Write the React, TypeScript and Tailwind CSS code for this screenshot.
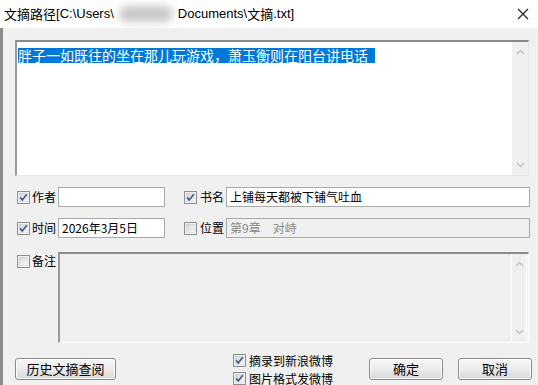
import React from 'react';

const cjk = { fontFamily: '"Noto Sans CJK SC", "Liberation Sans", sans-serif' };
const ui = { fontFamily: '"Liberation Sans", "Noto Sans CJK SC", sans-serif' };

const Check = ({ on = false }: { on?: boolean }) => (
  <svg width="13" height="13" viewBox="0 0 13 13" className="shrink-0">
    <defs>
      <linearGradient id={on ? 'cbOn' : 'cbOff'} x1="0" y1="0" x2="1" y2="1">
        <stop offset="0" stopColor="#d4d4d4" />
        <stop offset="1" stopColor="#fbfbfb" />
      </linearGradient>
    </defs>
    <rect x="0.5" y="0.5" width="12" height="12" fill="#fff" stroke="#8e8f8f" />
    <rect x="2" y="2" width="9" height="9" fill={`url(#${on ? 'cbOn' : 'cbOff'})`} stroke="#c9c9c9" strokeWidth="0.6" />
    {on && <path d="M3.2 6.4 L5.3 9 L9.8 3.2" fill="none" stroke="#3d5a9a" strokeWidth="1.7" />}
  </svg>
);

const ScrollBar = ({ light = false }: { light?: boolean }) => (
  <div className={`w-[16px] h-full flex flex-col justify-between items-center py-[7px] ${light ? 'border-l border-r border-white' : ''} bg-[#f0f0f0]`}>
    <svg width="9" height="6" viewBox="0 0 9 6"><path d="M1 5 L4.5 1.5 L8 5" fill="none" stroke="#c2c2c2" strokeWidth="1.4" /></svg>
    <svg width="9" height="6" viewBox="0 0 9 6"><path d="M1 1 L4.5 4.5 L8 1" fill="none" stroke="#c2c2c2" strokeWidth="1.4" /></svg>
  </div>
);

const Btn = ({ label, w }: { label: string; w: string }) => (
  <button
    className={`${w} h-[22px] rounded-[3px] border border-[#8a8a8a] bg-gradient-to-b from-[#f6f6f6] via-[#ebebeb] to-[#d8d8d8] text-[13px] text-black flex items-center justify-center shadow-[inset_0_0_0_1px_#fcfcfc]`}
    style={cjk}
  >
    {label}
  </button>
);

const Field = ({ w, value, disabled = false }: { w: string; value: string; disabled?: boolean }) => (
  <div
    className={`${w} h-[20px] border border-[#a9a9a9] flex items-center px-[3px] text-[12px] ${disabled ? 'bg-[#f0f0f0] text-[#8a8a8a]' : 'bg-white text-black'}`}
    style={cjk}
  >
    {value}
  </div>
);

export default function App() {
  return (
    <div className="w-[538px] h-[385px] overflow-hidden bg-[#f0f0f0] flex flex-col select-none" style={cjk}>
      {/* title bar */}
      <div className="h-[28px] bg-white flex items-center justify-between pl-[4px] pr-[9px] shrink-0">
        <div className="flex items-center text-[13px] text-black whitespace-nowrap" style={ui}>
          <span style={cjk}>文摘路径</span>
          <span>[C:\Users\</span>
          <span className="w-[64px] h-[18px] flex items-center justify-center">
            <span className="w-[54px] h-[16px] rounded-full bg-[#c8c8c8] blur-[4px]" />
          </span>
          <span>Documents\</span>
          <span style={cjk}>文摘</span>
          <span>.txt]</span>
        </div>
        <svg width="12" height="12" viewBox="0 0 12 12">
          <path d="M1 1 L11 11 M11 1 L1 11" stroke="#222" strokeWidth="1.2" />
        </svg>
      </div>

      <div className="flex flex-1 min-h-0">
        <div className="w-[3px] bg-[#8c8c8c] shrink-0" />
        <div className="flex-1 flex flex-col pl-[12px]">
          {/* main text */}
          <div className="mt-[12px] w-[514px] h-[136px] border-t-2 border-l-2 border-t-[#8a8a8a] border-l-[#9a9a9a] border-r border-b border-r-[#e6e6e6] border-b-[#e6e6e6] bg-white flex">
            <div className="flex-1 pt-[0px] pl-[1px]">
              <span className="bg-[#0078d7] text-white text-[14px] leading-[15px] inline-block pr-[7px] tracking-[0px]">
                胖子一如既往的坐在那儿玩游戏，萧玉衡则在阳台讲电话
              </span>
            </div>
            <ScrollBar />
          </div>

          {/* row 1 */}
          <div className="mt-[11px] flex items-center h-[20px]">
            <div className="ml-[2px]"><Check on /></div>
            <span className="ml-[2px] w-[26px] text-[12px] text-black">作者</span>
            <Field w="w-[107px]" value="" />
            <div className="ml-[19px]"><Check on /></div>
            <span className="ml-[3px] w-[26px] text-[12px] text-black">书名</span>
            <Field w="w-[304px]" value="上铺每天都被下铺气吐血" />
          </div>

          {/* row 2 */}
          <div className="mt-[11px] flex items-center h-[20px]">
            <div className="ml-[2px]"><Check on /></div>
            <span className="ml-[2px] w-[26px] text-[12px] text-black">时间</span>
            <Field w="w-[107px]" value="2026年3月5日" />
            <div className="ml-[19px]"><Check /></div>
            <span className="ml-[3px] w-[26px] text-[12px] text-black">位置</span>
            <Field w="w-[304px]" value="第9章　对峙" disabled />
          </div>

          {/* notes */}
          <div className="mt-[14px] flex items-start">
            <div className="ml-[2px] mt-[3px]"><Check /></div>
            <span className="ml-[2px] w-[26px] text-[12px] text-black leading-[18px]">备注</span>
            <div className="w-[471px] h-[91px] border-t-2 border-l-2 border-t-[#8a8a8a] border-l-[#9a9a9a] border-r border-b border-r-white border-b-white bg-[#f0f0f0] flex justify-end">
              <div className="pr-[1px] h-full"><ScrollBar light /></div>
            </div>
          </div>

          {/* bottom */}
          <div className="mt-[15px] flex items-start">
            <Btn label="历史文摘查阅" w="w-[101px]" />
            <div className="ml-[117px] flex flex-col gap-[5px] -mt-[4px]">
              <div className="flex items-center gap-[3px]">
                <Check on />
                <span className="text-[12px] text-black leading-[13px]">摘录到新浪微博</span>
              </div>
              <div className="flex items-center gap-[3px]">
                <Check on />
                <span className="text-[12px] text-black leading-[13px]">图片格式发微博</span>
              </div>
            </div>
            <div className="ml-[36px]"><Btn label="确定" w="w-[74px]" /></div>
            <div className="ml-[15px]"><Btn label="取消" w="w-[74px]" /></div>
          </div>
        </div>
      </div>
    </div>
  );
}
